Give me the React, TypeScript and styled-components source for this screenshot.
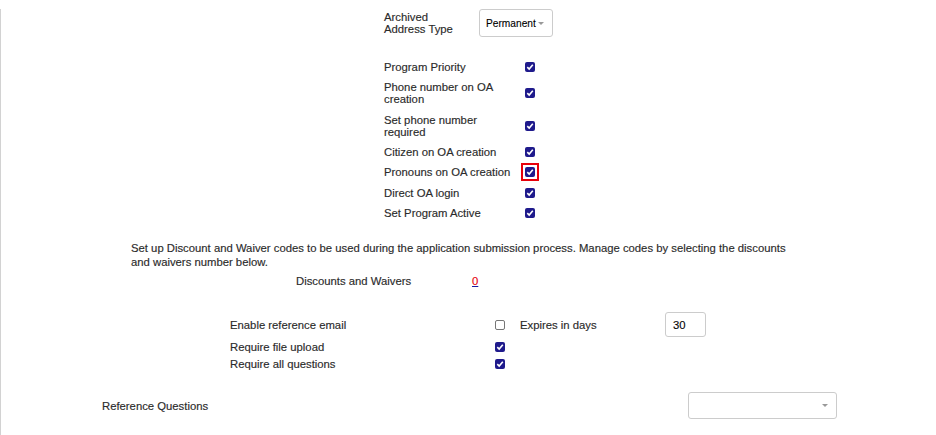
import React from "react";
import styled, { createGlobalStyle } from "styled-components";

const GlobalStyle = createGlobalStyle`
    body {
        margin: 0;
        background: #fff;
        font-family: "Liberation Sans", Arial, sans-serif;
        font-size: 11.3px;
        color: #2b2b2b;
        -webkit-text-stroke: 0.15px #2b2b2b;
    }
`;

const Pagina = styled.div`
    min-height: 435px;
    border-left: 1px solid #d2d2d2;
    box-sizing: border-box;
    padding-bottom: 12px;
`;

const Bloco = styled.div<{ $esquerda: number; $topo: number }>`
    padding-left: ${(p) => p.$esquerda}px;
    margin-top: ${(p) => p.$topo}px;
`;

const LinhaEndereco = styled.div`
    display: grid;
    grid-template-columns: 95px auto;
    align-items: center;
`;

const Rotulo = styled.span`
    line-height: 12px;
`;

const Seletor = styled.div<{ $largura: number; $altura: number }>`
    width: ${(p) => p.$largura}px;
    height: ${(p) => p.$altura}px;
    box-sizing: border-box;
    display: flex;
    align-items: center;
    justify-content: space-between;
    padding: 0 8px 0 6px;
    border: 1px solid #ccc;
    border-radius: 3px;
    background: #fff;
    color: #000;
    font-size: 10.2px;
    -webkit-text-stroke: 0.1px #000;
`;

const Seta = styled.span`
    width: 0;
    height: 0;
    border-left: 3px solid transparent;
    border-right: 3px solid transparent;
    border-top: 3px solid #999;
`;

const ListaOpcoes = styled.div`
    display: flex;
    flex-direction: column;
`;

const LinhaOpcao = styled.div`
    display: grid;
    grid-template-columns: 130px 10px;
    column-gap: 11px;
    align-items: center;
    padding: 4px 0 4.33px;
`;

const Caixa = styled.span<{ $marcada: boolean }>`
    width: 10px;
    height: 10px;
    box-sizing: border-box;
    display: flex;
    align-items: center;
    justify-content: center;
    border-radius: 2px;
    background: ${(p) => (p.$marcada ? "#1f1a8c" : "#fff")};
    border: ${(p) => (p.$marcada ? "none" : "1px solid #767676")};
`;

const Destaque = styled.span`
    display: flex;
    margin: -4px;
    padding: 2px;
    border: 2px solid #e8000b;
    width: fit-content;
`;

const Paragrafo = styled.p`
    margin: 0;
    max-width: 665px;
    line-height: 14px;
`;

const LinhaDescontos = styled.div`
    display: grid;
    grid-template-columns: 176px auto;
    line-height: 14px;
`;

const LinkZero = styled.a`
    color: #e8000b;
    -webkit-text-stroke: 0.15px #e8000b;
    text-decoration: underline;
    text-decoration-color: #1a1aa0;
    cursor: pointer;
`;

const GradeReferencia = styled.div`
    display: grid;
    grid-template-columns: 265px 25px 145px 41px;
    grid-template-rows: 25px 20px 13px;
    align-items: center;
`;

const CampoNumero = styled.div`
    width: 41px;
    height: 25px;
    box-sizing: border-box;
    display: flex;
    align-items: center;
    padding-left: 7px;
    border: 1px solid #ccc;
    border-radius: 3px;
    color: #000;
`;

const LinhaPerguntas = styled.div`
    display: flex;
    align-items: center;
    justify-content: space-between;
    padding-right: 99px;
`;

function Marca() {
    return (
        <svg width="8" height="8" viewBox="0 0 8 8">
            <path d="M1.3 4.2 L3.2 6 L6.8 1.8" fill="none" stroke="#fff" strokeWidth="1.6" />
        </svg>
    );
}

function Checkbox({ marcada, destaque }: { marcada: boolean; destaque?: boolean }) {
    const caixa = <Caixa $marcada={marcada}>{marcada && <Marca />}</Caixa>;
    return destaque ? <Destaque>{caixa}</Destaque> : caixa;
}

const opcoes = [
    { texto: "Program Priority" },
    { texto: "Phone number on OA creation" },
    { texto: "Set phone number required" },
    { texto: "Citizen on OA creation" },
    { texto: "Pronouns on OA creation", destaque: true },
    { texto: "Direct OA login" },
    { texto: "Set Program Active" },
];

export default function App() {
    return (
        <>
            <GlobalStyle />
            <Pagina>
                <Bloco $esquerda={383} $topo={9}>
                    <LinhaEndereco>
                        <Rotulo>
                            Archived
                            <br />
                            Address Type
                        </Rotulo>
                        <Seletor $largura={74} $altura={28}>
                            Permanent
                            <Seta />
                        </Seletor>
                    </LinhaEndereco>
                </Bloco>

                <Bloco $esquerda={383} $topo={20}>
                    <ListaOpcoes>
                        {opcoes.map((o) => (
                            <LinhaOpcao key={o.texto}>
                                <Rotulo>{o.texto}</Rotulo>
                                <Checkbox marcada destaque={o.destaque} />
                            </LinhaOpcao>
                        ))}
                    </ListaOpcoes>
                </Bloco>

                <Bloco $esquerda={130} $topo={18}>
                    <Paragrafo>
                        Set up Discount and Waiver codes to be used during the application submission
                        process. Manage codes by selecting the discounts and waivers number below.
                    </Paragrafo>
                </Bloco>

                <Bloco $esquerda={295} $topo={5}>
                    <LinhaDescontos>
                        <span>Discounts and Waivers</span>
                        <span>
                            <LinkZero>0</LinkZero>
                        </span>
                    </LinhaDescontos>
                </Bloco>

                <Bloco $esquerda={229} $topo={24}>
                    <GradeReferencia>
                        <Rotulo>Enable reference email</Rotulo>
                        <Checkbox marcada={false} />
                        <Rotulo>Expires in days</Rotulo>
                        <CampoNumero>30</CampoNumero>
                        <Rotulo>Require file upload</Rotulo>
                        <Checkbox marcada />
                        <span />
                        <span />
                        <Rotulo>Require all questions</Rotulo>
                        <Checkbox marcada />
                    </GradeReferencia>
                </Bloco>

                <Bloco $esquerda={101} $topo={22}>
                    <LinhaPerguntas>
                        <Rotulo>Reference Questions</Rotulo>
                        <Seletor $largura={149} $altura={27}>
                            <span />
                            <Seta />
                        </Seletor>
                    </LinhaPerguntas>
                </Bloco>
            </Pagina>
        </>
    );
}
